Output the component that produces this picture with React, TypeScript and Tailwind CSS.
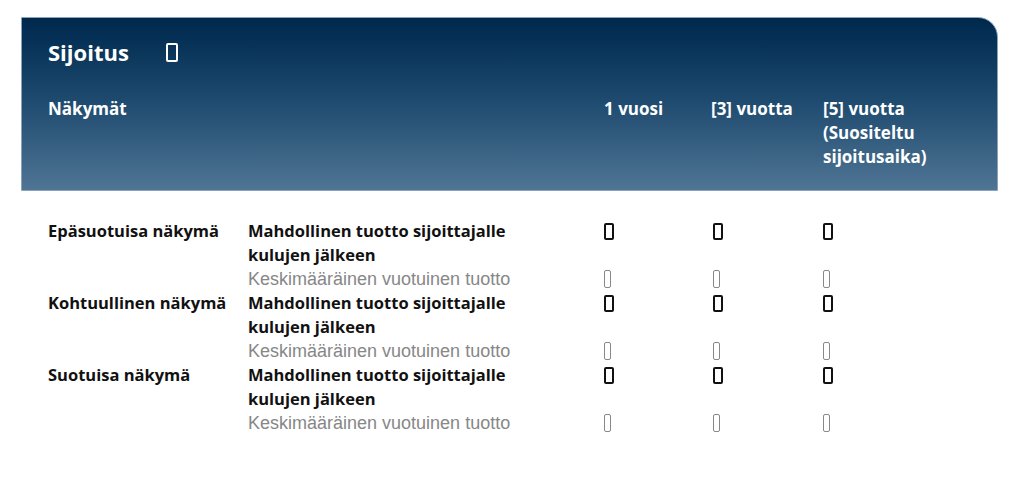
import React from "react";

const Bold = () => (
  <span className="inline-block w-[10px] h-[17px] border-[2.5px] border-[#111] rounded-[2px] align-middle" />
);
const Thin = () => (
  <span className="inline-block w-[7px] h-[18px] border border-[#888] rounded-[2px] align-middle" />
);

const rows = ["Epäsuotuisa näkymä", "Kohtuullinen näkymä", "Suotuisa näkymä"];

export default function App() {
  return (
    <div className="w-[1024px] h-[495px] bg-white pt-[17px] pl-[21px]" style={{ fontFamily: "'Open Sans', Lato, sans-serif" }}>
      <div className="w-[977px] rounded-tr-[20px] border border-[#8aa3ba] bg-gradient-to-b from-[#00284d] via-[#1f4c70] to-[#4f7594] pt-[22px] pb-[21px] pl-[26px] text-white">
        <div className="flex items-center h-[24px] text-[22px] font-bold">
          <span className="w-[118px]">Sijoitus</span>
          <span className="inline-block w-[12px] h-[19px] border-[2.5px] border-white rounded-[2px]" />
        </div>
        <div className="mt-[33px] flex text-[17px] font-bold leading-[24px]">
          <div className="w-[556px]">Näkymät</div>
          <div className="w-[107px]">1 vuosi</div>
          <div className="w-[112px]">[3] vuotta</div>
          <div>
            [5] vuotta
            <br />
            (Suositeltu
            <br />
            sijoitusaika)
          </div>
        </div>
      </div>
      <div className="mt-[28px] pl-[27px] leading-[24px] text-[16.5px] text-[#111]">
        {rows.map((r) => (
          <div key={r} className="flex">
            <div className="w-[200px] font-bold">{r}</div>
            <div className="w-[356px]">
              <div className="font-bold">
                Mahdollinen tuotto sijoittajalle
                <br />
                kulujen jälkeen
              </div>
              <div className="text-[18px] text-[#878787]" style={{ fontFamily: "'Liberation Sans', Arial, sans-serif" }}>
                Keskimääräinen vuotuinen tuotto
              </div>
            </div>
            {[109, 110, 110].map((w, i) => (
              <div key={i} className="flex flex-col" style={{ width: w }}>
                <div className="h-[48px] flex items-start pt-[4px]">
                  <Bold />
                </div>
                <div className="h-[24px] flex items-center">
                  <Thin />
                </div>
              </div>
            ))}
          </div>
        ))}
      </div>
    </div>
  );
}
